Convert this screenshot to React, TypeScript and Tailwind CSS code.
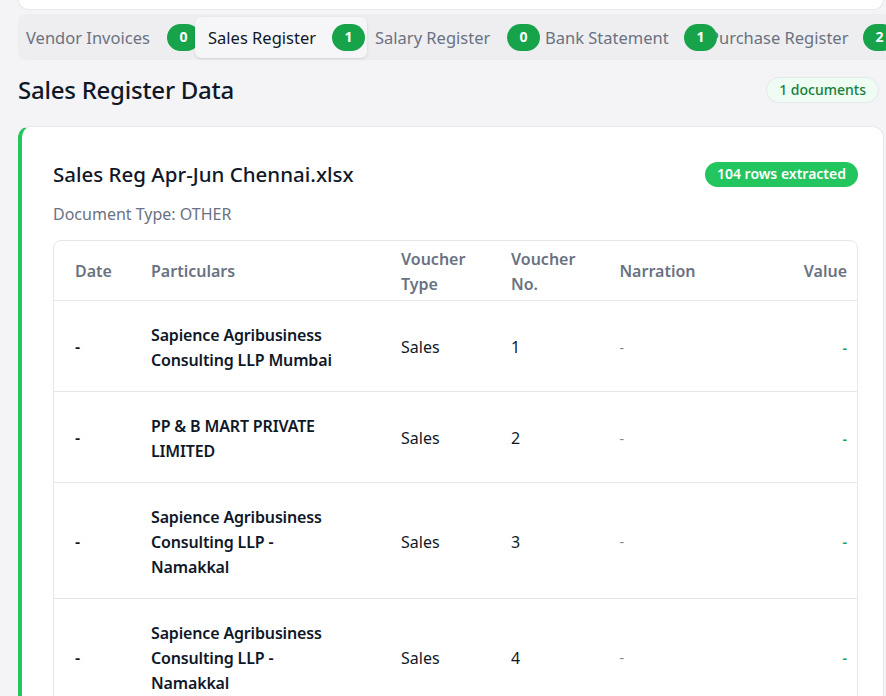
const tabs = [
    { label: "Vendor Invoices", wrap: "pl-2 w-[177px]", text: "w-[126px]", badge: "ml-[15px] -mr-[5px]" },
    { label: "Sales Register", wrap: "pl-[13px] w-[172px] bg-[#f6f6f8] rounded-md shadow-sm z-10", text: "w-[109px] text-gray-900", badge: "ml-[15px]", active: true },
    { label: "Salary Register", wrap: "pl-2 w-[177px]", text: "w-[117px]", badge: "ml-[15px]" },
    { label: "Bank Statement", wrap: "pl-px w-[165px]", text: "w-[125px]", badge: "ml-[14px] -mr-[8px] z-10" },
    { label: "Purchase Register", wrap: "w-[200px]", text: "w-[139px]", badge: "ml-[15px]" },
];

const counts = [0, 1, 0, 1, 2];

const rows = [
    { date: "-", particulars: "Sapience Agribusiness Consulting LLP Mumbai", type: "Sales", no: "1" },
    { date: "-", particulars: "PP & B MART PRIVATE LIMITED", type: "Sales", no: "2" },
    { date: "-", particulars: "Sapience Agribusiness Consulting LLP - Namakkal", type: "Sales", no: "3" },
    { date: "-", particulars: "Sapience Agribusiness Consulting LLP - Namakkal", type: "Sales", no: "4" },
];

const App = () => {
    return (
        <div className="w-full min-h-screen overflow-hidden bg-[#f4f4f6] pl-[18px] pr-[2px] font-['Noto_Sans','Open_Sans',sans-serif] text-gray-900">
            {/* bottom of the card above */}
            <div className="h-[10px] bg-white border-x border-b border-gray-200 rounded-b-xl"></div>

            {/* tabs */}
            <div className="mt-1 w-[1100px] h-[46px] bg-[#eeeef0] rounded-lg flex items-center">
                {tabs.map((tab, index) => (
                    <div key={index} className={`relative h-[41px] flex items-center shrink-0 ${tab.wrap}`}>
                        <span className={`pt-[3px] whitespace-nowrap text-[16.5px] ${tab.text} ${tab.active ? "" : "text-gray-500"}`}>{tab.label}</span>
                        <span className={`relative h-[27px] w-[33px] shrink-0 rounded-full bg-[#16a34a] text-white text-sm font-bold flex items-center justify-center ${tab.badge}`}>{counts[index]}</span>
                    </div>
                ))}
            </div>

            {/* heading */}
            <div className="mt-4 flex items-center justify-between">
                <div className="text-2xl font-medium tracking-[-0.01em] leading-[28px]">Sales Register Data</div>
                <div className="mr-[5px] h-[26px] px-3 flex items-center rounded-full border border-gray-200 bg-[#effcf3] text-sm font-medium text-[#15803d]">1 documents</div>
            </div>

            {/* document card */}
            <div className="mt-[22px] bg-white border border-gray-200 border-l-4 border-l-[#22c55e] rounded-xl pl-[31px] pr-[25px] pt-[31px] pb-8">
                <div className="flex items-center justify-between h-8">
                    <div className="text-[20.5px] font-medium">Sales Reg Apr-Jun Chennai.xlsx</div>
                    <div className="h-[25px] px-3 flex items-center rounded-full bg-[#22c55e] text-white text-sm font-semibold">104 rows extracted</div>
                </div>
                <div className="mt-3 text-base leading-6 text-gray-500">Document Type: OTHER</div>

                <div className="mt-[14px] border border-gray-200 rounded-lg overflow-hidden">
                    <table className="w-full text-base leading-[25px]">
                        <thead>
                            <tr className="h-[59px] border-b border-gray-200 text-left text-gray-500">
                                <th className="w-[77px] pl-[21px] pt-[3px] font-semibold">Date</th>
                                <th className="w-[250px] pl-5 pt-[3px] font-semibold">Particulars</th>
                                <th className="w-[110px] pl-5 pr-6 pt-[3px] font-semibold">Voucher Type</th>
                                <th className="w-[106px] pl-5 pr-6 pt-[3px] font-semibold">Voucher No.</th>
                                <th className="pl-5 pt-[3px] font-semibold">Narration</th>
                                <th className="pr-[10px] pt-[3px] text-right font-semibold">Value</th>
                            </tr>
                        </thead>
                        <tbody>
                            {rows.map((row, index) => (
                                <tr key={index} className="border-b border-gray-200">
                                    <td className="pl-[21px] pt-[22px] pb-[18px] font-semibold">{row.date}</td>
                                    <td className="pl-5 pr-7 pt-[22px] pb-[18px] font-semibold tracking-[-0.01em]">{row.particulars}</td>
                                    <td className="pl-5 pt-[22px] pb-[18px]">{row.type}</td>
                                    <td className="pl-5 pt-[22px] pb-[18px]">{row.no}</td>
                                    <td className="pl-5 pt-[22px] pb-[18px] text-sm text-[#7b8794]">-</td>
                                    <td className="pr-[10px] pt-[22px] pb-[18px] text-right text-sm font-semibold text-[#16a34a]">-</td>
                                </tr>
                            ))}
                        </tbody>
                    </table>
                </div>
            </div>
        </div>
    );
};

export default App;
